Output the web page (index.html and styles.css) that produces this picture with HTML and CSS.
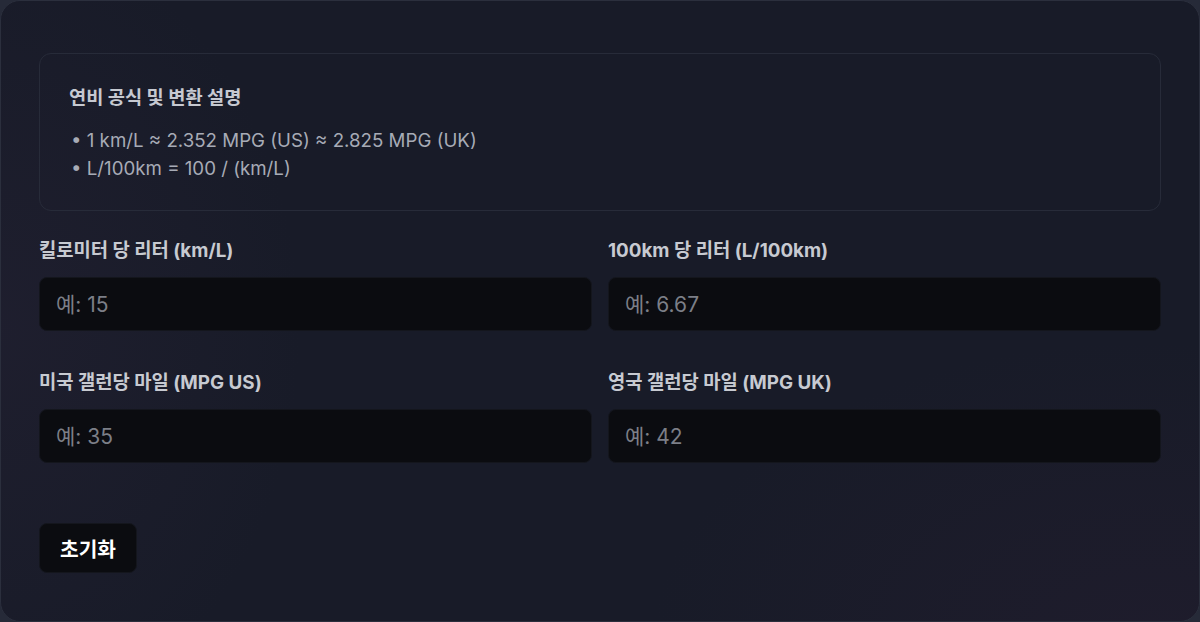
FILE: index.html
```html
<!DOCTYPE html>
<html lang="ko">
<head>
<meta charset="utf-8">
<title>연비 변환기</title>
<link rel="stylesheet" href="styles.css">
</head>
<body>
<main class="card">
  <section class="info">
    <h2 class="info-title">연비 공식 및 변환 설명</h2>
    <ul class="info-list">
      <li>• 1 km/L ≈ 2.352 MPG (US) ≈ 2.825 MPG (UK)</li>
      <li>• L/100km = 100 / (km/L)</li>
    </ul>
  </section>
  <div class="fields">
    <label class="field">
      <span class="field-label">킬로미터 당 리터 (km/L)</span>
      <input class="field-input" type="text" placeholder="예: 15">
    </label>
    <label class="field">
      <span class="field-label">100km 당 리터 (L/100km)</span>
      <input class="field-input" type="text" placeholder="예: 6.67">
    </label>
    <label class="field">
      <span class="field-label">미국 갤런당 마일 (MPG US)</span>
      <input class="field-input" type="text" placeholder="예: 35">
    </label>
    <label class="field">
      <span class="field-label">영국 갤런당 마일 (MPG UK)</span>
      <input class="field-input" type="text" placeholder="예: 42">
    </label>
  </div>
  <div class="actions">
    <button class="reset-btn" type="button">초기화</button>
  </div>
</main>
</body>
</html>
```

FILE: styles.css
```css
* { box-sizing: border-box; }

html, body {
  margin: 0;
  padding: 0;
  background: #262a38;
}

body {
  font-family: Inter, "Noto Sans CJK KR", "Noto Sans", sans-serif;
  width: 1200px;
  height: 622px;
  overflow: hidden;
}

.card {
  width: 1200px;
  height: 622px;
  border: 1px solid #2b2f3d;
  border-radius: 20px;
  padding: 52px 38px 0 38px;
  background:
    radial-gradient(ellipse 500px 300px at 1150px 640px, rgba(40, 30, 50, 0.4), rgba(40, 30, 50, 0) 100%),
    radial-gradient(ellipse 300px 400px at 0px 330px, rgba(45, 38, 60, 0.3), rgba(45, 38, 60, 0) 100%),
    #181b28;
}

.info {
  border: 1px solid #272b39;
  border-radius: 12px;
  padding: 32px 29px 28px 29px;
  height: 158px;
}

.info-title {
  margin: 0 0 17px 0;
  font-size: 18.7px;
  line-height: 24px;
  font-weight: 700;
  color: #c6c9d1;
}

.info-list {
  list-style: none;
  margin: 0;
  padding: 0 0 0 2px;
  font-size: 18.7px;
  line-height: 28px;
  color: #a7abb6;
}

.fields {
  display: grid;
  grid-template-columns: 1fr 1fr;
  column-gap: 16px;
  row-gap: 40px;
  margin-top: 28px;
}

.field {
  display: flex;
  flex-direction: column;
  gap: 14px;
}

.field-label {
  font-size: 18.8px;
  line-height: 24px;
  font-weight: 700;
  color: #c7cad1;
}

.field-input {
  height: 54px;
  border: 1px solid #14161d;
  border-radius: 8px;
  background: #0b0c10;
  padding: 0 16px;
  font-family: inherit;
  font-size: 21px;
  color: #e5e7eb;
  outline: none;
}

.field-input::placeholder {
  color: #7c7f87;
}

.actions {
  margin-top: 60px;
  display: flex;
}

.reset-btn {
  height: 50px;
  padding: 0 20px;
  border: 1px solid #14161d;
  border-radius: 8px;
  background: #0b0c10;
  color: #ffffff;
  font-family: inherit;
  font-size: 20.3px;
  font-weight: 700;
  cursor: pointer;
}
```
